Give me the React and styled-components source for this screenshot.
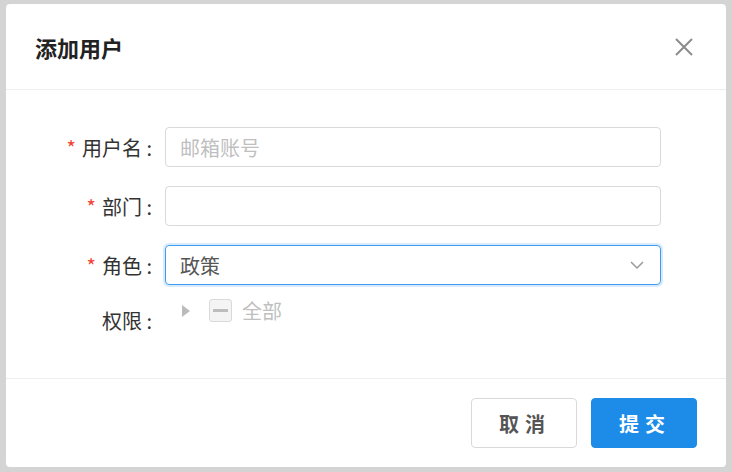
import React from "react";
import styled, { createGlobalStyle } from "styled-components";

const G = createGlobalStyle`
  html,body{margin:0;padding:0;background:#d4d4d4;font-family:"Noto Sans CJK SC","Noto Sans",sans-serif;}
`;
const Page = styled.div`
  width:732px;height:472px;padding:4px 6px 0;box-sizing:border-box;
`;
const Modal = styled.div`
  width:720px;height:463px;background:#fff;border-radius:4px;display:flex;flex-direction:column;
`;
const Header = styled.div`
  height:85px;border-bottom:1px solid #eeeeee;display:flex;align-items:center;justify-content:space-between;padding:0 32px 0 29px;
`;
const Title = styled.div`font-size:22px;font-weight:700;color:#222;`;
const Body = styled.div`
  flex:1;padding:37px 0 0;display:flex;flex-direction:column;gap:19px;
`;
const Row = styled.div`display:flex;align-items:${p=>p.top?"flex-start":"center"};`;
const Label = styled.div`
  width:146px;text-align:right;font-size:20px;color:#333;padding-right:13px;flex-shrink:0;
  ${p=>p.top?"padding-top:2px;":""}
`;
const Star = styled.span`color:#f04134;margin-right:6px;`;
const Input = styled.div`
  width:496px;height:40px;box-sizing:border-box;border:1px solid ${p=>p.focus?"#3c9df0":"#d9d9d9"};
  border-radius:4px;display:flex;align-items:center;justify-content:space-between;padding:0 16px 0 14px;font-size:20px;
  color:${p=>p.ph?"#bfbfbf":"#555"};
  ${p=>p.focus?"box-shadow:0 0 0 2px rgba(60,157,240,0.2);":""}
`;
const Tree = styled.div`display:flex;align-items:center;gap:10px;padding-left:16px;margin-top:-8px;color:#bfbfbf;font-size:20px;`;
const Check = styled.span`
  width:23px;height:23px;box-sizing:border-box;border:1px solid #d9d9d9;border-radius:3px;background:#f4f4f4;
  display:flex;align-items:center;justify-content:center;margin-left:8px;
  &::after{content:"";width:15px;height:3px;background:#bdbdbd;}
`;
const Footer = styled.div`
  height:88px;border-top:1px solid #eeeeee;display:flex;align-items:center;justify-content:flex-end;gap:14px;padding-right:29px;
`;
const Btn = styled.button`
  width:106px;height:50px;border-radius:4px;font-size:20px;font-weight:700;letter-spacing:6px;padding-left:8px;
  font-family:inherit;cursor:pointer;
  border:1px solid ${p=>p.primary?"#1c8ce8":"#d9d9d9"};
  background:${p=>p.primary?"#1c8ce8":"#fff"};color:${p=>p.primary?"#fff":"#555"};
`;

export default function App(){
  return (<Page><G/><Modal>
    <Header><Title>添加用户</Title>
      <svg width="20" height="20" viewBox="0 0 20 20"><path d="M2 2L18 18M18 2L2 18" stroke="#8c8c8c" strokeWidth="2"/></svg>
    </Header>
    <Body>
      <Row><Label><Star>*</Star>用户名 :</Label><Input ph>邮箱账号</Input></Row>
      <Row><Label><Star>*</Star>部门 :</Label><Input/></Row>
      <Row><Label><Star>*</Star>角色 :</Label><Input focus>政策
        <svg width="14" height="10" viewBox="0 0 14 10"><path d="M1 2L7 8L13 2" stroke="#999" strokeWidth="1.5" fill="none"/></svg></Input></Row>
      <Row top><Label top>权限 :</Label>
        <Tree><svg width="10" height="14" viewBox="0 0 10 14"><path d="M1 1L9 7L1 13Z" fill="#bbb"/></svg><Check/>全部</Tree></Row>
    </Body>
    <Footer><Btn>取消</Btn><Btn primary>提交</Btn></Footer>
  </Modal></Page>);
}
